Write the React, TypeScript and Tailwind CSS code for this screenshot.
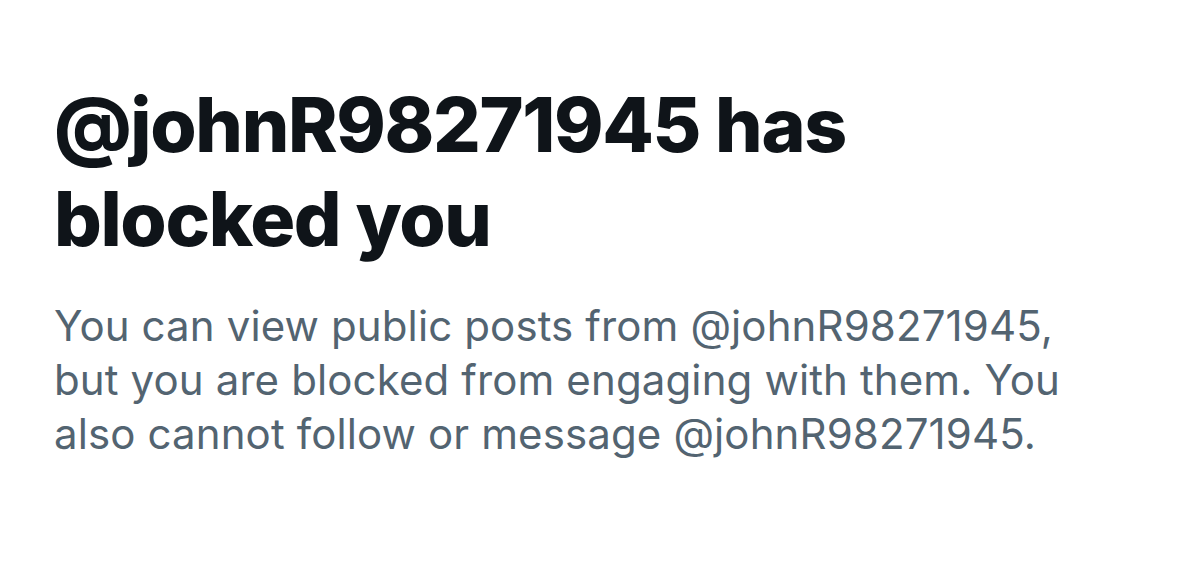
import React from "react";

export default function App() {
  return (
    <div className="w-[1179px] h-[568px] bg-white overflow-hidden pl-[54px] pt-[78px]" style={{ fontFamily: 'Inter, "Liberation Sans", Arial, sans-serif' }}>
      <h1 className="text-[75px] leading-[94px] font-extrabold tracking-[-1.35px] text-[#0f1419] w-[1100px]">
        @johnR98271945 has
        <br />
        blocked you
      </h1>
      <p className="mt-[33px] text-[42px] leading-[54px] text-[#536471] tracking-[0.12px] w-[1100px]">
        You can view public posts from @johnR98271945,
        <br />
        but you are blocked from engaging with them. You
        <br />
        also cannot follow or message @johnR98271945.
      </p>
    </div>
  );
}
